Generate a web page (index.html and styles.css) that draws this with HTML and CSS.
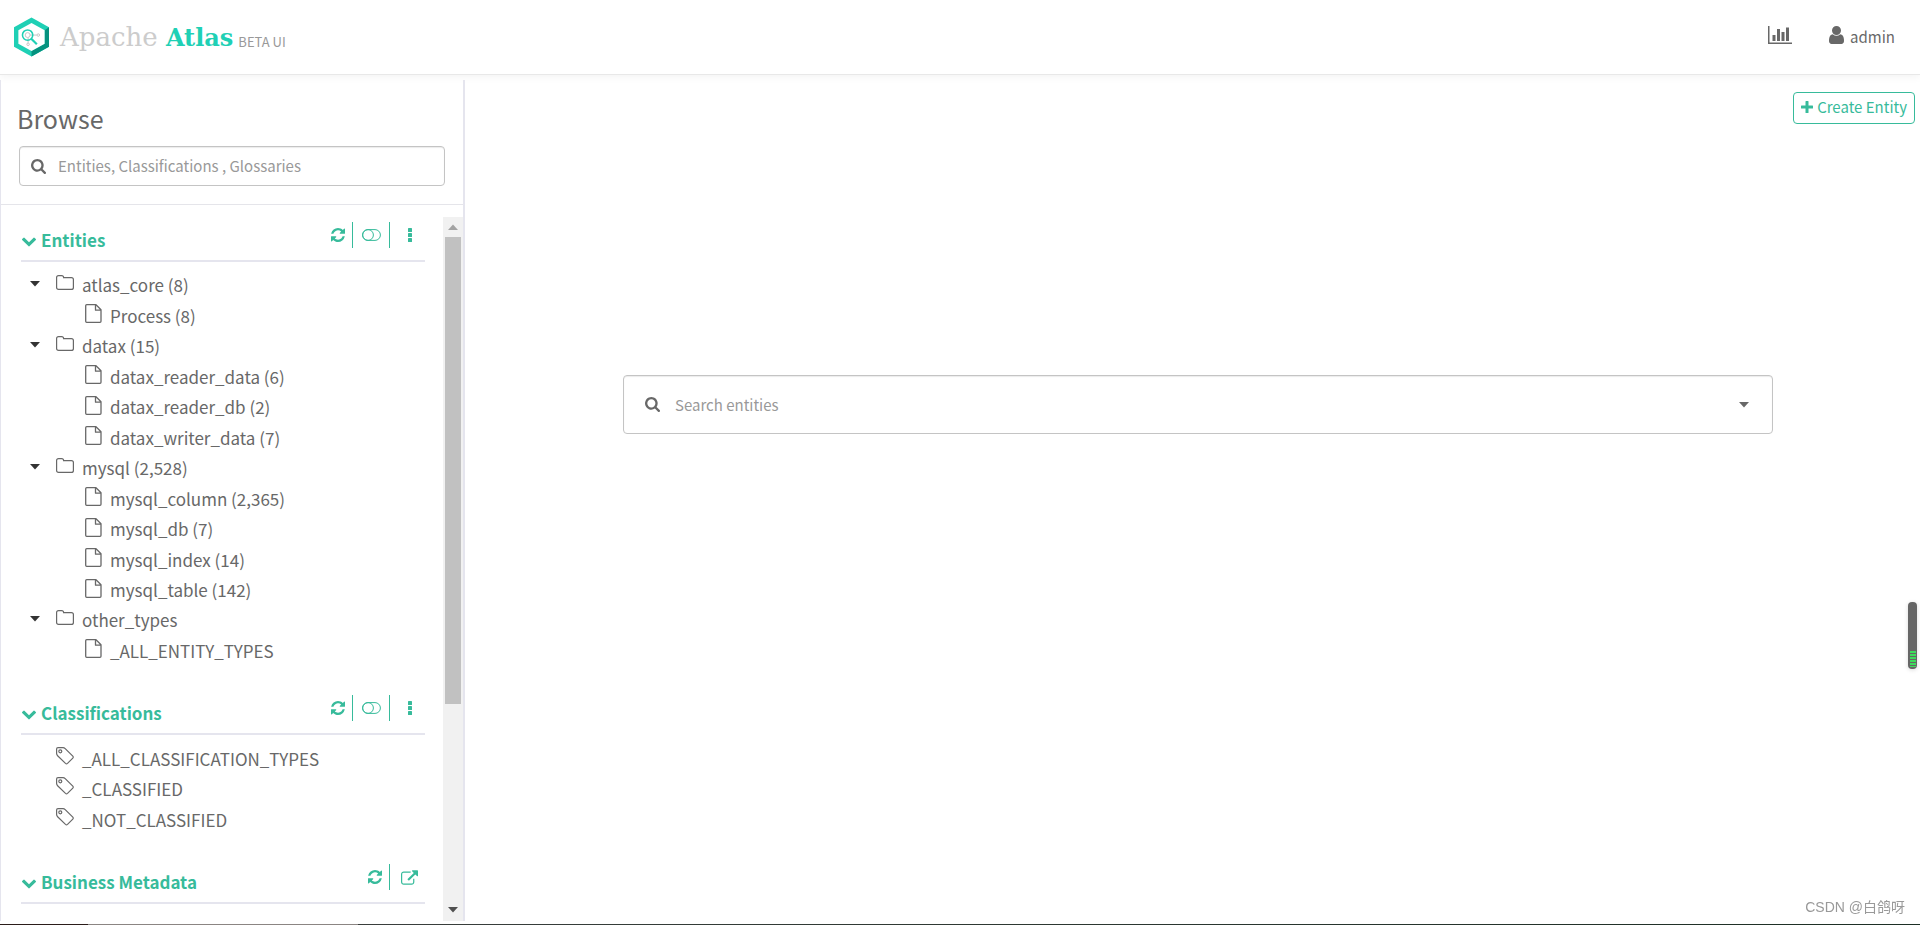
FILE: index.html
```html
<!DOCTYPE html>
<html lang="en">
<head>
<meta charset="utf-8">
<title>Apache Atlas</title>
<link rel="stylesheet" href="styles.css">
</head>
<body>
<svg class="sprite" aria-hidden="true">
  <symbol id="i-search" viewBox="64 128 1664 1664"><path d="M1216 832q0-185-131.500-316.500t-316.500-131.500-316.500 131.500-131.500 316.500 131.500 316.500 316.500 131.500 316.500-131.500 131.500-316.500zm512 832q0 52-38 90t-90 38q-54 0-90-38l-343-342q-179 124-399 124-143 0-273.500-55.500t-225-150-150-225-55.500-273.500 55.500-273.500 150-225 225-150 273.500-55.500 273.500 55.500 225 150 150 225 55.500 273.500q0 220-124 399l343 343q37 37 37 90z"/></symbol>
  <symbol id="i-refresh" viewBox="0 0 1536 1536"><path d="M1511 928q0 5-1 7-64 268-268 434.500t-478 166.500q-146 0-282.500-55t-243.500-157l-129 129q-19 19-45 19t-45-19-19-45v-448q0-26 19-45t45-19h448q26 0 45 19t19 45-19 45l-137 137q71 66 161 102t187 36q134 0 250-65t186-179q11-17 53-117 8-23 30-23h192q13 0 22.500 9.500t9.500 22.500zm25-800v448q0 26-19 45t-45 19h-448q-26 0-45-19t-19-45 19-45l138-138q-148-137-349-137-134 0-250 65t-186 179q-11 17-53 117-8 23-30 23h-199q-13 0-22.500-9.500t-9.500-22.500v-7q65-268 270-434.500t480-166.500q146 0 284 55.500t245 156.500l130-129q19-19 45-19t45 19 19 45z"/></symbol>
  <symbol id="i-chevron" viewBox="90 530 1612 1040"><path d="M1683 808l-742 741q-19 19-45 19t-45-19l-742-741q-19-19-19-45.500t19-45.500l166-165q19-19 45-19t45 19l531 531 531-531q19-19 45-19t45 19l166 165q19 19 19 45.500t-19 45.500z"/></symbol>
  <symbol id="i-user" viewBox="256 128 1280 1536"><path d="M1536 1399q0 109-62.500 187t-150.500 78h-854q-88 0-150.500-78t-62.500-187q0-85 8.500-160.500t31.500-152 58.500-131 94-89 134.500-34.500q131 128 313 128t313-128q76 0 134.500 34.500t94 89 58.500 131 31.500 152 8.500 160.500zm-256-887q0 159-112.500 271.500t-271.500 112.500-271.500-112.500-112.500-271.500 112.500-271.500 271.500-112.500 271.500 112.500 112.500 271.500z"/></symbol>
  <symbol id="i-chart" viewBox="0 128 2048 1536"><path d="M640 896v512h-256v-512h256zm384-512v1024h-256v-1024h256zm1024 1152v128h-2048v-1536h128v1408h1920zm-640-896v768h-256v-768h256zm384-384v1152h-256v-1152h256z"/></symbol>
  <symbol id="i-external" viewBox="0 0 1792 1536"><path d="M1408 928v320q0 119-84.500 203.500t-203.500 84.500h-832q-119 0-203.500-84.500t-84.500-203.500v-832q0-119 84.500-203.500t203.500-84.500h704q14 0 23 9t9 23v64q0 14-9 23t-23 9h-704q-66 0-113 47t-47 113v832q0 66 47 113t113 47h832q66 0 113-47t47-113v-320q0-14 9-23t23-9h64q14 0 23 9t9 23zm384-864v512q0 26-19 45t-45 19-45-19l-176-176-652 652q-10 10-23 10t-23-10l-114-114q-10-10-10-23t10-23l652-652-176-176q-19-19-19-45t19-45 45-19h512q26 0 45 19t19 45z"/></symbol>
  <symbol id="i-toggle" viewBox="0 0 19 12"><g fill="none" stroke="currentColor"><rect x=".6" y=".6" width="17.800" height="10.800" rx="5.400"/><circle cx="6" cy="6" r="5.400"/></g></symbol>
  <symbol id="i-dots" viewBox="0 0 4 14"><rect width="4" height="4" rx=".6"/><rect y="5" width="4" height="4" rx=".6"/><rect y="10" width="4" height="4" rx=".6"/></symbol>
  <symbol id="i-plus" viewBox="0 0 12 12"><path d="M5 0h2q.5 0 .5.500v4h4q.5 0 .5.500v2q0 .5-.5.500h-4v4q0 .5-.5.500H5q-.5 0-.5-.5v-4h-4Q0 7.500 0 7V5q0-.5.500-.5h4v-4Q4.500 0 5 0z"/></symbol>
  <symbol id="i-folder" viewBox="0 0 18 15"><path fill="none" stroke="currentColor" stroke-width="1.200" d="M.6 2.600q0-2 2-2h3q2 0 2 2h7.800q2 0 2 2v7.800q0 2-2 2H2.600q-2 0-2-2z"/></symbol>
  <symbol id="i-file" viewBox="0 0 17 19"><path fill="none" stroke="currentColor" stroke-width="1.300" stroke-linejoin="round" d="M1.700.7H11l5 5v11.600q0 1-1 1H1.700q-1 0-1-1V1.700q0-1 1-1zM10.500.7v5.500H16"/></symbol>
  <symbol id="i-tag" viewBox="0 0 18 18"><g fill="none" stroke="currentColor" stroke-width="1.200"><path d="M.6 2q0-1.400 1.400-1.400h5q1.200 0 2.200 1l7.600 7.500q.9 1 0 2l-5.300 5.300q-1 .9-2 0L1.600 8.700q-1-1-1-2.100z"/><circle cx="4.300" cy="4.300" r="1.500"/></g></symbol>
  <symbol id="i-caret" viewBox="0 0 10 6"><path d="M0 0h10L5 5.500z"/></symbol>
</svg>

<header class="topbar">
  <a class="brand" href="#">
    <svg class="brand-mark" viewBox="0 0 36 40" aria-hidden="true">
      <path fill="#1fd0b5" d="M18 0l18 10v20L18 40 0 30V10z"/>
      <path fill="#05927f" d="M31.500 13L36 10v20L18 40v-5.500l13.500-7.500z"/>
      <path fill="#fff" d="M18 5.500L31.500 13v14L18 34.500 4.500 27V13z"/>
      <g fill="none" stroke="#c4c4c4"><circle cx="14" cy="18" r="2.500"/><circle cx="25" cy="18" r="1.300"/><circle cx="14.500" cy="27.500" r="1.300"/><path d="M16.500 18h7M14.500 20.500v5.500"/></g>
      <circle cx="14" cy="18" r="5.300" fill="none" stroke="#1fd0b5" stroke-width="1.600"/>
      <path stroke="#1fd0b5" stroke-width="2.200" d="M17.500 21.500l6 6"/>
    </svg>
    <span class="brand-name">Apache <b>Atlas</b></span>
    <span class="brand-tag">BETA UI</span>
  </a>
  <nav class="topnav">
    <a href="#" aria-label="Statistics"><svg class="icon-chart"><use href="#i-chart"/></svg></a>
    <a href="#" class="account"><svg class="icon-user"><use href="#i-user"/></svg>admin</a>
  </nav>
</header>

<div class="layout">
  <aside class="sidebar">
    <div class="browse">
      <h1>Browse</h1>
      <label class="field">
        <svg class="icon-search"><use href="#i-search"/></svg>
        <input type="text" placeholder="Entities, Classifications , Glossaries" aria-label="Browse filter">
      </label>
    </div>
    <div class="panel">
      <div class="sections">
        <section>
          <header class="section-head">
            <h2><svg class="icon-chevron"><use href="#i-chevron"/></svg>Entities</h2>
            <div class="tools">
              <button type="button" aria-label="Refresh"><svg class="icon-refresh"><use href="#i-refresh"/></svg></button>
              <button type="button" aria-label="Toggle empty"><svg class="icon-toggle"><use href="#i-toggle"/></svg></button>
              <button type="button" aria-label="More"><svg class="icon-dots"><use href="#i-dots"/></svg></button>
            </div>
          </header>
          <ul class="tree">
            <li><a class="node" href="#"><svg class="icon-caret"><use href="#i-caret"/></svg><svg class="icon-folder"><use href="#i-folder"/></svg>atlas_core (8)</a>
              <ul>
                <li><a class="leaf" href="#"><svg class="icon-file"><use href="#i-file"/></svg>Process (8)</a></li>
              </ul></li>
            <li><a class="node" href="#"><svg class="icon-caret"><use href="#i-caret"/></svg><svg class="icon-folder"><use href="#i-folder"/></svg>datax (15)</a>
              <ul>
                <li><a class="leaf" href="#"><svg class="icon-file"><use href="#i-file"/></svg>datax_reader_data (6)</a></li>
                <li><a class="leaf" href="#"><svg class="icon-file"><use href="#i-file"/></svg>datax_reader_db (2)</a></li>
                <li><a class="leaf" href="#"><svg class="icon-file"><use href="#i-file"/></svg>datax_writer_data (7)</a></li>
              </ul></li>
            <li><a class="node" href="#"><svg class="icon-caret"><use href="#i-caret"/></svg><svg class="icon-folder"><use href="#i-folder"/></svg>mysql (2,528)</a>
              <ul>
                <li><a class="leaf" href="#"><svg class="icon-file"><use href="#i-file"/></svg>mysql_column (2,365)</a></li>
                <li><a class="leaf" href="#"><svg class="icon-file"><use href="#i-file"/></svg>mysql_db (7)</a></li>
                <li><a class="leaf" href="#"><svg class="icon-file"><use href="#i-file"/></svg>mysql_index (14)</a></li>
                <li><a class="leaf" href="#"><svg class="icon-file"><use href="#i-file"/></svg>mysql_table (142)</a></li>
              </ul></li>
            <li><a class="node" href="#"><svg class="icon-caret"><use href="#i-caret"/></svg><svg class="icon-folder"><use href="#i-folder"/></svg>other_types</a>
              <ul>
                <li><a class="leaf" href="#"><svg class="icon-file"><use href="#i-file"/></svg>_ALL_ENTITY_TYPES</a></li>
              </ul></li>
          </ul>
        </section>
        <section>
          <header class="section-head">
            <h2><svg class="icon-chevron"><use href="#i-chevron"/></svg>Classifications</h2>
            <div class="tools">
              <button type="button" aria-label="Refresh"><svg class="icon-refresh"><use href="#i-refresh"/></svg></button>
              <button type="button" aria-label="Toggle empty"><svg class="icon-toggle"><use href="#i-toggle"/></svg></button>
              <button type="button" aria-label="More"><svg class="icon-dots"><use href="#i-dots"/></svg></button>
            </div>
          </header>
          <ul class="tree">
            <li><a class="tag" href="#"><svg class="icon-tag"><use href="#i-tag"/></svg>_ALL_CLASSIFICATION_TYPES</a></li>
            <li><a class="tag" href="#"><svg class="icon-tag"><use href="#i-tag"/></svg>_CLASSIFIED</a></li>
            <li><a class="tag" href="#"><svg class="icon-tag"><use href="#i-tag"/></svg>_NOT_CLASSIFIED</a></li>
          </ul>
        </section>
        <section>
          <header class="section-head">
            <h2><svg class="icon-chevron"><use href="#i-chevron"/></svg>Business Metadata</h2>
            <div class="tools">
              <button type="button" aria-label="Refresh"><svg class="icon-refresh"><use href="#i-refresh"/></svg></button>
              <button type="button" aria-label="Open"><svg class="icon-external"><use href="#i-external"/></svg></button>
            </div>
          </header>
        </section>
      </div>
      <div class="scrollbar" aria-hidden="true">
        <svg class="scroll-up"><use href="#i-caret"/></svg>
        <div class="scroll-track"><div class="scroll-thumb"></div></div>
        <svg class="scroll-down"><use href="#i-caret"/></svg>
      </div>
    </div>
  </aside>
  <main class="content">
    <button type="button" class="create"><svg class="icon-plus"><use href="#i-plus"/></svg>Create Entity</button>
    <div class="search">
      <label class="field field-large">
        <svg class="icon-search"><use href="#i-search"/></svg>
        <input type="text" placeholder="Search entities" aria-label="Search entities">
        <button type="button" class="open" aria-label="Search options"><svg class="icon-caret"><use href="#i-caret"/></svg></button>
      </label>
    </div>
  </main>
</div>

<div class="edge" aria-hidden="true"></div>
<div class="battery" aria-hidden="true"><div class="battery-level"></div></div>
<div class="watermark">CSDN @白鸽呀</div>
</body>
</html>
```
FILE: styles.css
```css
* { box-sizing: border-box; }

body {
  margin: 0;
  height: 100vh;
  display: flex;
  flex-direction: column;
  overflow: hidden;
  background: #fff;
  color: #686868;
  font: 17px/30px "Noto Sans CJK SC", "Noto Sans", sans-serif;
}

a { color: inherit; text-decoration: none; }
h1, h2 { margin: 0; }
ul { margin: 0; padding: 0; list-style: none; }
svg { display: block; flex: none; fill: currentColor; }
button { padding: 0; border: 0; background: none; color: inherit; font: inherit; }
.sprite { position: absolute; width: 0; height: 0; }

.icon-search { width: 15px; height: 15px; }
.icon-refresh { width: 14px; height: 14px; }
.icon-toggle { width: 19px; height: 12px; }
.icon-dots { width: 4px; height: 14px; }
.icon-external { width: 17px; height: 15px; }
.icon-chevron { width: 14px; height: 10px; }
.icon-caret { width: 10px; height: 6px; }
.icon-folder { width: 18px; height: 15px; }
.icon-file { width: 17px; height: 19px; }
.icon-tag { width: 18px; height: 18px; }
.icon-plus { width: 12px; height: 12px; }
.icon-chart { width: 24px; height: 18px; }
.icon-user { width: 15px; height: 18px; }

.topbar {
  flex: none;
  height: 75px;
  padding: 0 25px 0 14px;
  display: flex;
  align-items: center;
  justify-content: space-between;
  border-bottom: 1px solid #e8e8e8;
  box-shadow: 0 2px 8px rgba(0, 0, 0, .05);
}
.brand { display: flex; align-items: center; }
.brand-mark { width: 35px; height: 40px; margin-right: 11px; }
.brand-name { padding-top: 1px; color: #ccc; font: 26px/40px "DejaVu Serif", serif; }
.brand-name b { color: #1fd0b5; font-size: 24px; }
.brand-tag { margin: 10px 0 0 5px; color: #999; font-size: 13px; line-height: 24px; }
.topnav { display: flex; align-items: center; gap: 37px; font-size: 15px; line-height: 24px; }
.account { display: flex; align-items: center; gap: 6px; }
.topnav svg { margin-bottom: 4px; }

.layout { flex: 1; min-height: 0; display: flex; padding: 5px 0 4px; }

.sidebar {
  flex: none;
  width: 465px;
  display: flex;
  flex-direction: column;
  border-left: 1px solid #e5e5ee;
  border-right: 2px solid #e5e5ee;
}
.browse { padding: 18px 18px 18px 16px; border-bottom: 1px solid #e5e5ea; }
.browse h1 { margin-bottom: 8px; font-size: 25px; font-weight: 400; line-height: 40px; }
.browse .field { margin-left: 2px; }

.field {
  height: 40px;
  padding: 0 11px;
  display: flex;
  align-items: center;
  gap: 12px;
  border: 1px solid #c4c4c4;
  border-radius: 4px;
  box-shadow: inset 0 1px 1px rgba(0, 0, 0, .08);
}
.field input {
  flex: 1;
  min-width: 0;
  padding: 0;
  border: 0;
  outline: 0;
  background: none;
  color: inherit;
  font: 15px/24px "Noto Sans CJK SC", "Noto Sans", sans-serif;
}
.field input::placeholder { color: #999; opacity: 1; }
.field-large { height: 59px; padding: 0 23px 0 21px; gap: 15px; }

.panel { flex: 1; min-height: 0; display: flex; padding-top: 12px; }
.sections { flex: 1; min-width: 0; padding: 0 18px 0 20px; overflow: hidden; }
.section-head {
  display: flex;
  align-items: flex-start;
  justify-content: space-between;
  padding: 5px 0 2px 1px;
  border-bottom: 2px solid #e5e5ee;
  color: #37bb9b;
}
.section-head h2 { display: flex; align-items: center; gap: 5px; font-size: 17px; line-height: 36px; }
.section-head h2 svg { margin-top: 4px; }
.tools { display: flex; }
.tools button { width: 37px; height: 26px; display: grid; place-items: center; }
.tools button + button { padding-left: 1px; border-left: 1px solid #37bb9b; }
.tools button:first-child { width: 29px; }
.tools button:last-child { width: 36px; padding-left: 4px; }

.tree { padding: 8px 0 24px; }
.node, .leaf, .tag { display: flex; align-items: center; gap: 8px; white-space: nowrap; }
.node { height: 30px; padding-left: 9px; }
.leaf { height: 31px; padding-left: 64px; }
.tag { height: 31px; padding-left: 35px; }
li:nth-child(even) > .leaf, li:nth-child(even) > .tag { height: 30px; }
.node .icon-caret { margin: 0 8px 3px 0; color: #333; }
.icon-folder, .icon-tag { margin-bottom: 6px; }
.icon-file { margin-bottom: 4px; }

.scrollbar { flex: none; width: 20px; display: flex; flex-direction: column; align-items: center; background: #f1f1f1; }
.scroll-up { width: 10px; height: 6px; margin: 7px 0; transform: rotate(180deg); color: #a3a3a3; }
.scroll-down { width: 10px; height: 6px; margin: 6px 0 8px; color: #505050; }
.scroll-track { flex: 1; width: 16px; }
.scroll-thumb { height: 70.4%; background: #c1c1c1; }

.content { flex: 1; min-width: 0; display: flex; flex-direction: column; padding: 12px 5px 0 0; }
.create {
  align-self: flex-end;
  display: flex;
  align-items: center;
  gap: 4px;
  height: 32px;
  padding: 0 7px 2px;
  border: 1px solid #37bb9b;
  border-radius: 4px;
  color: #37bb9b;
  font-size: 15px;
  line-height: 24px;
}
.search { margin-top: 251px; padding: 0 142px 0 158px; }

.edge {
  position: fixed;
  inset: auto 0 0 0;
  height: 1px;
  background: linear-gradient(90deg, #2b1d1a 88px, #8b8583 88px, #8b8583 358px, #3a3f3d 358px, #1d2f25);
}
.battery {
  position: fixed;
  top: 602px;
  right: 3px;
  width: 9px;
  height: 67px;
  padding: 49px 1px 2px 2px;
  border-radius: 4px;
  background: #666;
  box-shadow: 0 1px 4px rgba(0, 0, 0, .15);
}
.battery-level { height: 16px; background: repeating-linear-gradient(#3ddc5c 0 2px, #666 2px 3px); }
.watermark {
  position: fixed;
  right: 15px;
  bottom: 8px;
  color: #999;
  font: 14px/20px "Liberation Sans", "Noto Sans CJK SC", sans-serif;
}
```
